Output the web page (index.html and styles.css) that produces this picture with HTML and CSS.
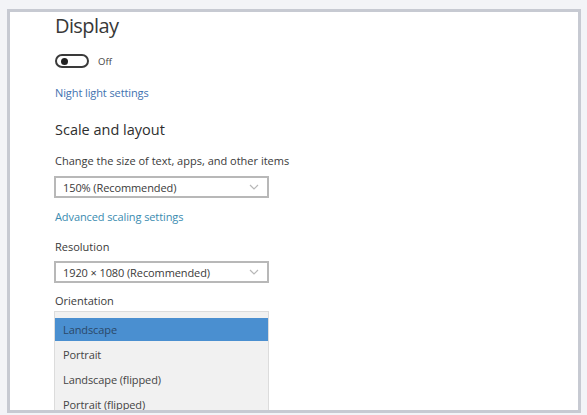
FILE: index.html
```html
<!DOCTYPE html>
<html lang="en">
<head>
    <meta charset="UTF-8">
    <meta name="viewport" content="width=device-width, initial-scale=1.0">
    <title>Display</title>
    <link rel="stylesheet" href="styles.css">
</head>
<body>
    <div class="frame">
        <div class="panel">
            <h1 class="title">Display</h1>
            <div class="toggle-row">
                <span class="toggle"><span class="knob"></span></span>
                <span class="toggle-label">Off</span>
            </div>
            <a class="link night" href="#">Night light settings</a>

            <h2 class="section">Scale and layout</h2>
            <div class="label first">Change the size of text, apps, and other items</div>
            <div class="select">
                <span>150% (Recommended)</span>
                <svg class="chev" width="10" height="6" viewBox="0 0 10 6"><path d="M1 1l4 4 4-4" fill="none" stroke="#b8b8b8" stroke-width="1.2"/></svg>
            </div>
            <a class="link advanced" href="#">Advanced scaling settings</a>

            <div class="label resolution">Resolution</div>
            <div class="select res">
                <span>1920 × 1080 (Recommended)</span>
                <svg class="chev" width="10" height="6" viewBox="0 0 10 6"><path d="M1 1l4 4 4-4" fill="none" stroke="#b8b8b8" stroke-width="1.2"/></svg>
            </div>

            <div class="label orientation">Orientation</div>
            <ul class="options">
                <li class="selected">Landscape</li>
                <li>Portrait</li>
                <li>Landscape (flipped)</li>
                <li>Portrait (flipped)</li>
            </ul>
        </div>
    </div>
</body>
</html>
```

FILE: styles.css
```css
body {
    margin: 0;
    background: #f3f4f7;
    font-family: "Open Sans", "Liberation Sans", sans-serif;
    color: #333;
    height: 415px;
    overflow: hidden;
}
.frame {
    margin: 9px 6px 0 7px;
    height: 398px;
    border: 3px solid #c7cad2;
    background: #fff;
    overflow: hidden;
}
.panel {
    padding-left: 45px;
    width: 214px;
}
.title {
    margin: 0;
    font-size: 20px;
    font-weight: 400;
    line-height: 28px;
    color: #383838;
    letter-spacing: -0.6px;
}
.toggle-row {
    margin-top: 14px;
    height: 14px;
    display: flex;
    align-items: center;
    gap: 9px;
}
.toggle {
    box-sizing: border-box;
    width: 34px;
    height: 14px;
    border: 2px solid #3a3a3a;
    border-radius: 7px;
    display: flex;
    align-items: center;
    padding-left: 4px;
}
.knob {
    width: 7px;
    height: 7px;
    border-radius: 50%;
    background: #222;
}
.toggle-label {
    font-size: 9.5px;
    color: #444;
}
.link {
    display: block;
    font-size: 11px;
    line-height: 14px;
    text-decoration: none;
    white-space: nowrap;
    letter-spacing: -0.1px;
}
.night {
    margin-top: 18px;
    color: #4272b0;
}
.section {
    margin: 20px 0 0 0;
    font-size: 14.5px;
    font-weight: 400;
    line-height: 20px;
    color: #2e2e2e;
}
.label {
    font-size: 11px;
    line-height: 14px;
    color: #3a3a3a;
    white-space: nowrap;
}
.first {
    margin-top: 14px;
    letter-spacing: 0;
}
.select {
    box-sizing: border-box;
    margin-top: 8px;
    width: 215px;
    height: 22px;
    border: 2px solid #b8b8b8;
    display: flex;
    align-items: center;
    justify-content: space-between;
    padding: 0 8px 0 7px;
    font-size: 11px;
    letter-spacing: -0.1px;
    color: #3a3a3a;
    margin-left: -1px;
}
.advanced {
    margin-top: 12px;
    color: #3a8bb0;
}
.resolution {
    margin-top: 16px;
}
.res {
    margin-top: 7px;
}
.orientation {
    margin-top: 11px;
}
.options {
    list-style: none;
    margin: 3px 0 0 -1px;
    padding: 5px 0 0 0;
    width: 215px;
    box-sizing: border-box;
    border: 1px solid #dcdcdc;
    background: #f1f1f1;
}
.options li {
    line-height: 25px;
    height: 25px;
    padding-left: 8px;
    font-size: 11px;
    letter-spacing: -0.1px;
    color: #444;
}
.options .selected {
    background: #4a8fd0;
    color: #2a4868;
    height: 23px;
    line-height: 23px;
    margin: 1px 0;
}
```
